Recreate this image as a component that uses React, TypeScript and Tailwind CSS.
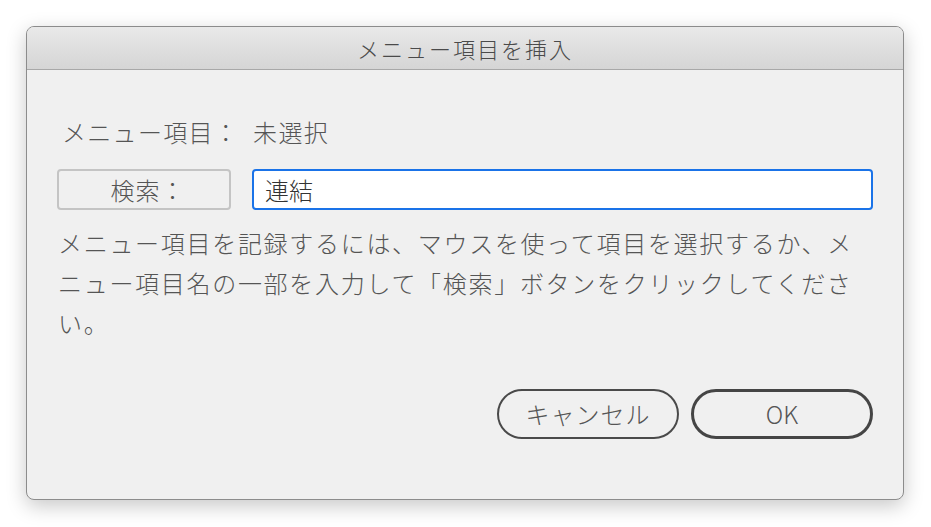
export default function App() {
  const font = { fontFamily: '"Noto Sans CJK JP", "Noto Sans", sans-serif' };

  return (
    <div
      className="w-[931px] h-[527px] bg-white pt-[26px] pl-[26px] overflow-hidden"
      style={font}
    >
      {/* Dialog */}
      <div className="w-[878px] h-[474px] rounded-[8px] border border-[#8c8c8c] bg-[#f0f0f0] overflow-hidden shadow-[0_6px_20px_rgba(0,0,0,0.22)] flex flex-col">
        {/* Title bar */}
        <div className="h-[43px] shrink-0 flex items-center justify-center bg-gradient-to-b from-[#e9e9e9] to-[#d5d5d5] border-b border-[#a8a8a8]">
          <span className="text-[22px] font-light tracking-[2px] text-[#4a4a4a] leading-none">
            メニュー項目を挿入
          </span>
        </div>

        {/* Body */}
        <div className="flex-1 flex flex-col pl-[30px] pr-[30px] pt-[46px] font-light">
          <div className="flex items-center h-[32px] ml-[5px] text-[24px] tracking-[1.3px] text-[#555] leading-none">
            <span>メニュー項目：</span>
            <span className="ml-[14px]">未選択</span>
          </div>

          <div className="flex items-center mt-[21px] h-[41px]">
            <button className="w-[174px] h-[41px] rounded-[4px] border-2 border-[#c4c4c4] bg-[#f0f0f0] text-[24px] text-[#555] leading-none tracking-[1px] flex items-center justify-center pl-[8px]">
              検索：
            </button>
            <div className="ml-[21px] flex-1 h-[41px] rounded-[4px] border-2 border-[#1a73e8] bg-white flex items-center pl-[11px] text-[24px] text-[#333] leading-none">
              連結
            </div>
          </div>

          <p className="mt-[13px] ml-[1px] text-[24px] leading-[40px] tracking-[1.7px] text-[#555] whitespace-nowrap">
            メニュー項目を記録するには、マウスを使って項目を選択するか、メ
            <br />
            ニュー項目名の一部を入力して「検索」ボタンをクリックしてくださ
            <br />
            い。
          </p>

          <div className="mt-[46px] flex justify-end gap-[12px]">
            <button className="w-[182px] h-[50px] rounded-full border-2 border-[#4a4a4a] bg-[#f0f0f0] text-[24px] text-[#555] leading-none tracking-[1px] flex items-center justify-center">
              キャンセル
            </button>
            <button className="w-[182px] h-[50px] rounded-full border-[3px] border-[#454545] bg-[#f0f0f0] text-[24px] text-[#555] leading-none flex items-center justify-center">
              OK
            </button>
          </div>
        </div>
      </div>
    </div>
  );
}
